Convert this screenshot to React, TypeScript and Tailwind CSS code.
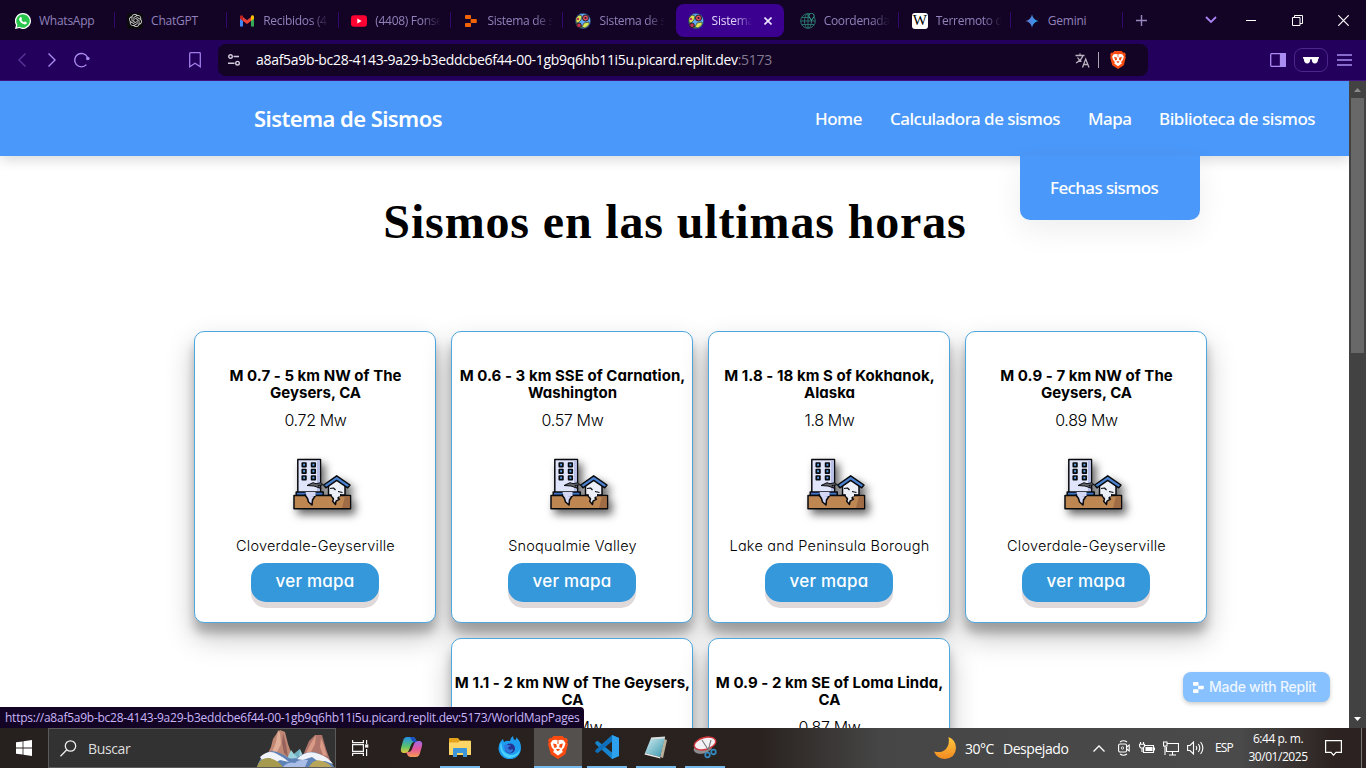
import React from 'react';
import { SiOpenai } from 'react-icons/si';

const segoe = "font-['Open_Sans','Noto_Sans',sans-serif]";

function GlobeQuake() {
  return (
    <svg width="16" height="16" viewBox="0 0 16 16">
      <circle cx="8" cy="8" r="7.7" fill="#61a8f5" stroke="#16234a" strokeWidth=".6" />
      <path d="M1 5l3-3 3 1-1 4-3 3-2-1zM9 10l5-1v3l-4 3-3-1zM1 10l5 2 1 3-4-1z" fill="#dbe457" stroke="#1a2b20" strokeWidth=".6" />
      <circle cx="10.5" cy="5" r="3" fill="#e84a63" stroke="#222" />
      <circle cx="10.5" cy="5" r="1.1" fill="#222" />
      <circle cx="4" cy="12.3" r="2.3" fill="#c73350" stroke="#222" />
      <circle cx="3" cy="6" r="1.2" fill="#c73350" />
    </svg>
  );
}

function ReplitMark({ color, w = 12 }: { color: string; w?: number }) {
  return (
    <svg width={w} height={w} viewBox="0 0 12 12" fill={color}>
      <rect x="0" y="0" width="6" height="4" rx=".8" />
      <rect x="5.6" y="4" width="6.2" height="4" rx=".8" />
      <rect x="0" y="8" width="6" height="4" rx=".8" />
    </svg>
  );
}

function BraveMark({ w, h }: { w: number; h: number }) {
  return (
    <svg width={w} height={h} viewBox="0 0 20 23">
      <path d="M5.5 0h9l2.2 2.2 1.7-.3L20 4.5l-.7 2 .7 1.7-2.7 10L10 23l-7.3-4.8L0 8.2l.7-1.7-.7-2L1.6 1.9l1.7.3z" fill="#fb4b10" />
      <path d="M4.5 4.2l3-.5 2.500.8 2.500-.8 3 .5 2 3-1.200 4-2.300 2.800.8 2L10 19.500 5.200 16l.8-2-2.300-2.800-1.200-4z" fill="#fff" />
      <path d="M5 7.500l3.400.8.400 3-2.400.7zM15 7.500l-3.400.8-.4 3 2.400.7zM7.800 13.600l2.200-.9 2.200.9L10 15.300zM9.500 4.500h1V8h-1z" fill="#fb4b10" />
    </svg>
  );
}

const favicons: Record<string, React.ReactNode> = {
  whatsapp: (
    <svg width="16" height="16" viewBox="0 0 16 16">
      <path d="M8 0a8 8 0 1 1-3.700 15.100L0 16l1-4A8 8 0 0 1 8 0z" fill="#fff" />
      <path d="M8 1.200a6.800 6.800 0 1 1-3.600 12.600L1.800 14.400l.6-2.600A6.800 6.800 0 0 1 8 1.200z" fill="#27c64b" />
      <path d="M5.300 4.200c.5-.3 1-.1 1.200.4l.5 1.200c.1.400-.4.800-.6 1.200.6 1.100 1.500 1.900 2.600 2.300.4-.2.700-.9 1.200-.8l1.400.7c.4.200.2 1.100-.1 1.500-1 1.200-2.800.7-4.200-.1-1.600-1-3-2.800-3.200-4.300-.1-.8.500-1.700 1.200-2.100z" fill="#fff" />
    </svg>
  ),
  chatgpt: (
    <span className="flex h-4 w-4 items-center justify-center rounded-[3px] bg-[#0b0b0b]">
      <SiOpenai size={13} color="#d8d8d8" />
    </span>
  ),
  gmail: (
    <svg width="16" height="16" viewBox="0 0 16 16">
      <path d="M1 4v9.500h3V7z" fill="#4285f4" />
      <path d="M15 4v9.500h-3V7z" fill="#34a853" />
      <path d="M4 4l4 3.200L12 4v4L8 11 4 8z" fill="#ea4335" />
      <path d="M1 4c0-2 2-2 3-1v5L1 5.800z" fill="#c5221f" />
      <path d="M15 4c0-2-2-2-3-1v5l3-2.200z" fill="#fbbc04" />
    </svg>
  ),
  youtube: (
    <svg width="16" height="16" viewBox="0 0 16 16">
      <rect y="2.300" width="16" height="11.500" rx="3" fill="#ff0033" />
      <path d="M6.300 5.600v5L10.700 8z" fill="#fff" />
    </svg>
  ),
  replit: <ReplitMark color="#f26207" />,
  globe: <GlobeQuake />,
  coords: (
    <svg width="16" height="16" viewBox="0 0 16 16" fill="none" stroke="#2a7168" strokeWidth="1">
      <circle cx="8" cy="8" r="7.300" />
      <ellipse cx="8" cy="8" rx="3.500" ry="7.300" />
      <path d="M8 1v14M1 8h14M2 4.500h12M2 11.500h12" />
      <path d="M11.500 7.500L9 3.500a2.600 2.600 0 1 1 5 0z" fill="#130426" stroke="#35b595" />
    </svg>
  ),
  wiki: (
    <span className="flex h-4 w-4 items-center justify-center rounded-[3px] bg-white font-['Liberation_Serif',serif] text-[15px] leading-none text-black">
      W
    </span>
  ),
  gemini: (
    <svg width="16" height="16" viewBox="0 0 16 16">
      <defs>
        <linearGradient id="gem">
          <stop stopColor="#6f6fd0" />
          <stop offset="1" stopColor="#1fa4f0" />
        </linearGradient>
      </defs>
      <path d="M8 1.500Q9.200 6.800 14.500 8 9.200 9.200 8 14.500 6.800 9.200 1.500 8 6.800 6.800 8 1.500z" fill="url(#gem)" />
    </svg>
  ),
};

const tabs = [
  { icon: 'whatsapp', label: 'WhatsApp', sep: true },
  { icon: 'chatgpt', label: 'ChatGPT', sep: true },
  { icon: 'gmail', label: 'Recibidos (4', sep: true, fade: true },
  { icon: 'youtube', label: '(4408) Fonse', sep: true, fade: true },
  { icon: 'replit', label: 'Sistema de s', sep: true, fade: true },
  { icon: 'globe', label: 'Sistema de s', fade: true },
  { icon: 'globe', label: 'Sistema', active: true, fade: true },
  { icon: 'coords', label: 'Coordenada', sep: true, fade: true },
  { icon: 'wiki', label: 'Terremoto d', sep: true, fade: true },
  { icon: 'gemini', label: 'Gemini', sep: true },
];

function TabStrip() {
  return (
    <div className={`flex h-10 items-center bg-[#130426] pl-[3px] text-[12px] text-[#9181ba] ${segoe}`}>
      {tabs.map((t, i) => (
        <div key={i} className="flex h-full w-[112.100px] shrink-0 items-center">
          <div
            className={`mt-px flex h-[33px] w-[108.500px] items-center gap-2 pl-3 ${t.active ? 'rounded-lg bg-[#3b0090] text-[#e0d4fb]' : ''}`}
          >
            <span className="flex w-4 shrink-0 justify-center">{favicons[t.icon]}</span>
            <span
              className={`overflow-hidden whitespace-nowrap ${
                t.active ? 'w-10 [mask-image:linear-gradient(to_right,black_55%,transparent)]' : 'w-[68px]'
              } ${t.fade && !t.active ? 'tracking-[-0.300px] [mask-image:linear-gradient(to_right,black_70%,transparent_97%)]' : 'tracking-[-0.250px]'}`}
            >
              {t.label}
            </span>
            {t.active && (
              <svg className="ml-1" width="8" height="8" viewBox="0 0 8 8" stroke="#f0e8ff" strokeWidth="1.600">
                <path d="M.5.500l7 7M7.500.500l-7 7" />
              </svg>
            )}
          </div>
          <div className={`ml-[2px] h-4 w-px shrink-0 ${t.sep ? 'bg-[#31086b]' : ''}`} />
        </div>
      ))}
      <svg className="ml-[12px]" width="11" height="11" viewBox="0 0 11 11" stroke="#9686bd" strokeWidth="1.400">
        <path d="M5.500 0v11M0 5.500h11" />
      </svg>
      <svg className="ml-[58px]" width="12" height="8" viewBox="0 0 12 8" fill="none" stroke="#a983f5" strokeWidth="1.800">
        <path d="M1 1l5 5 5-5" />
      </svg>
      <div className="ml-[29px] h-px w-[10px] bg-white" />
      <svg className="ml-9" width="11" height="11" viewBox="0 0 11 11" fill="none" stroke="#fff">
        <path d="M.5 2.500h7.500v8H.500zM2.500 2.500v-2h8v8H8" />
      </svg>
      <svg className="ml-[35px]" width="11" height="11" viewBox="0 0 11 11" stroke="#fff" strokeWidth="1.200">
        <path d="M.3.300l10.400 10.400M10.700.300L.3 10.700" />
      </svg>
    </div>
  );
}

function Toolbar() {
  return (
    <div className={`flex h-[41px] items-center border-b border-[#43147f] bg-[#22005c] ${segoe}`}>
      <svg className="ml-[17px]" width="10" height="16" viewBox="0 0 10 16" fill="none" stroke="#59359a" strokeWidth="1.400">
        <path d="M8.500 1.500L2 8l6.500 6.500" />
      </svg>
      <svg className="ml-5" width="10" height="16" viewBox="0 0 10 16" fill="none" stroke="#ab8df2" strokeWidth="1.400">
        <path d="M1.500 1.500L8 8l-6.500 6.500" />
      </svg>
      <svg className="ml-4" width="18" height="16" viewBox="0 0 18 16" fill="none" stroke="#ab8df2" strokeWidth="1.400">
        <path d="M13.400 12.600A6.700 6.700 0 1 1 14.300 5" />
        <circle cx="14.800" cy="6.500" r="1.800" fill="#ab8df2" stroke="none" />
      </svg>
      <svg className="ml-[97px]" width="14" height="16" viewBox="0 0 14 16" fill="none" stroke="#9f7ee8" strokeWidth="1.300">
        <path d="M2.500.700h9q.800 0 .8.800v13.300L7 11.300l-5.300 3.500V1.500q0-.8.800-.8z" />
      </svg>
      <div className="ml-4 flex h-8 w-[930px] items-center rounded-lg bg-[#130426] pl-[10px]">
        <svg width="12" height="12" viewBox="0 0 12 12" fill="none" stroke="#d2cbdc" strokeWidth="1.400">
          <circle cx="2.500" cy="2.500" r="1.800" />
          <circle cx="9.500" cy="9.200" r="1.800" />
          <path d="M5.500 2.500H11M0 9.200h6.500" />
        </svg>
        <div className="ml-4 w-[516px] whitespace-nowrap text-[14px] leading-5 tracking-[-0.310px] text-white">
          a8af5a9b-bc28-4143-9a29-b3eddcbe6f44-00-1gb9q6hb11i5u.picard.replit.dev
          <span className="text-[#82798f]">:5173</span>
        </div>
        <svg className="mt-px ml-[303px]" width="15" height="15" viewBox="0 0 15 15" fill="none" stroke="#b8b3bf" strokeWidth="1.300">
          <path d="M.5 2.500h9M5 .500v2M8 2.500Q6.500 7 1 10M2.500 4.500Q4 7 6.500 8.500M7.500 14.500l3.200-8.500 3.300 8.500M8.700 11.500h4.200" />
        </svg>
        <div className="ml-2 h-4 w-px bg-[#aaa5b0]" />
        <div className="ml-[11px]">
          <BraveMark w={16} h={18} />
        </div>
      </div>
      <svg className="ml-[122px]" width="16" height="14" viewBox="0 0 16 14" fill="none" stroke="#ab8df2" strokeWidth="1.300">
        <rect x=".7" y=".7" width="14.600" height="12.600" rx="1" />
        <rect x="10.500" y=".7" width="4.800" height="12.600" fill="#ab8df2" />
      </svg>
      <div className="ml-2 flex h-6 w-[34px] items-center justify-center rounded-lg border border-[#4c268c]">
        <svg width="16" height="7" viewBox="0 0 16 7" fill="#fff">
          <path d="M0 0h16v1.500l-.8.300Q15 6.500 11.800 6.500 9 6.500 8.700 2.200H7.300Q7 6.500 4.200 6.500 1 6.500.8 1.800L0 1.500z" />
        </svg>
      </div>
      <svg className="ml-[9px]" width="15" height="12" viewBox="0 0 15 12" stroke="#ab8df2" strokeWidth="1.300">
        <path d="M0 1h15M0 6h15M0 11h15" />
      </svg>
    </div>
  );
}

function QuakeIcon() {
  return (
    <svg
      className="[filter:drop-shadow(4px_5px_4px_rgba(0,0,0,0.6))]"
      width="59"
      height="52"
      viewBox="0 0 59 52"
      stroke="#080a0e"
      strokeWidth="1.500"
      strokeLinejoin="round"
    >
      <rect x="4.800" y="1.500" width="22.700" height="35" fill="#e1e5fb" />
      <path d="M24 2.200h2.800V36H24z" fill="#b9c0e8" stroke="none" />
      <g fill="#5aa0e8" strokeWidth="1.700">
        <rect x="9.300" y="5" width="3.600" height="3.600" />
        <rect x="18.600" y="5" width="3.600" height="3.600" />
        <rect x="9.300" y="11.500" width="3.600" height="3.600" />
        <rect x="18.600" y="11.500" width="3.600" height="3.600" />
        <rect x="9.300" y="18" width="3.600" height="3.600" />
        <rect x="18.600" y="18" width="3.600" height="3.600" />
      </g>
      <path d="M14 27.500l6-2.800 3 1 5-1 2 2-5 .8 3 3-7-2.500z" fill="#64656b" strokeWidth="1" />
      <rect x="3.200" y="34" width="27" height="3.500" fill="#3f74c8" />
      <path d="M35.500 37V26l8.200-6.500L52 26v11z" fill="#eef0f8" />
      <path d="M30.700 27l13-9.200L57 27l-2.300 2.800-11-7.400-10.800 7.400z" fill="#4c83d0" />
      <path d="M37 30.500l3.500-.5 2 2M45 33.500l4.500 1" fill="none" strokeWidth="1.200" />
      <rect x="1" y="37.500" width="56.500" height="13.300" fill="#be8752" />
      <path d="M52 38.300h4.700v11.800H49z" fill="#a06c45" stroke="none" />
      <path d="M12 37l2.500 3.500 1 3.500 3.500 3 .5-5 3-4.500z" fill="#d3d6f5" />
      <path d="M12.500 34h10v4h-9z" fill="#d3d6f5" stroke="none" />
      <path d="M38 37.500l2.500 3.500-.8 2.200 2.800 3.300.5-3.300 3.500-2-1.500-1.300 2.500-3z" fill="#eef0f8" />
      <path d="M38.500 35h8.500v3.500h-8z" fill="#eef0f8" stroke="none" />
    </svg>
  );
}

const quakes = [
  { l1: 'M 0.7 - 5 km NW of The', l2: 'Geysers, CA', mag: '0.72 Mw', place: 'Cloverdale-Geyserville' },
  { l1: 'M 0.6 - 3 km SSE of Carnation,', l2: 'Washington', mag: '0.57 Mw', place: 'Snoqualmie Valley' },
  { l1: 'M 1.8 - 18 km S of Kokhanok,', l2: 'Alaska', mag: '1.8 Mw', place: 'Lake and Peninsula Borough' },
  { l1: 'M 0.9 - 7 km NW of The', l2: 'Geysers, CA', mag: '0.89 Mw', place: 'Cloverdale-Geyserville' },
  { l1: 'M 1.1 - 2 km NW of The Geysers,', l2: 'CA', mag: '1.06 Mw', place: 'Cloverdale-Geyserville' },
  { l1: 'M 0.9 - 2 km SE of Loma Linda,', l2: 'CA', mag: '0.87 Mw', place: 'Loma Linda' },
];

function QuakeCard({ q }: { q: (typeof quakes)[number] }) {
  return (
    <div className="flex h-[292px] w-[242px] shrink-0 flex-col items-center rounded-[10px] border border-[#4fa7e0] bg-white pt-[35px] text-center font-['Inter','Open_Sans',sans-serif] whitespace-nowrap text-black shadow-[0_14px_28px_rgba(0,0,0,0.25),0_10px_10px_rgba(0,0,0,0.22)] [font-feature-settings:'cv11']">
      <h2 className="pl-[2px] text-[15px] leading-[17px] font-bold tracking-[0.040px]">
        {q.l1}
        <br />
        {q.l2}
      </h2>
      <p className="mt-[9px] pl-[2px] text-[16px] leading-5 font-light tracking-[-0.340px]">{q.mag}</p>
      <div className="mt-[28px] ml-4 h-[52px]">
        <QuakeIcon />
      </div>
      <p className="mt-[26px] pl-[2px] text-[14.500px] leading-5 font-light tracking-[0.220px]">{q.place}</p>
      <button className="mt-[7px] h-[39px] w-32 rounded-[15px] bg-[#3498db] pb-[3px] pl-px text-[17px] leading-5 font-medium tracking-[0.200px] text-white shadow-[0_6px_0_#e0d9da]">
        ver mapa
      </button>
    </div>
  );
}

function SiteHeader() {
  return (
    <header className="relative z-10 flex h-[75px] shrink-0 items-center bg-[#4a98f9] pr-[34px] pl-[254px] font-['Noto_Sans',sans-serif] whitespace-nowrap text-white shadow-[0_4px_12px_rgba(0,0,0,0.15)]">
      <div className="w-[187px] text-[22px] font-semibold tracking-[-0.580px]">Sistema de Sismos</div>
      <nav className="ml-auto flex gap-7 text-[17px] font-medium tracking-[-0.520px]">
        <a className="w-[47px]">Home</a>
        <a className="w-[170px]">Calculadora de sismos</a>
        <a className="w-[43px]">Mapa</a>
        <a className="w-[156px] tracking-[-0.450px]">Biblioteca de sismos</a>
      </nav>
      <div className="absolute top-[75px] left-[1020px] flex h-16 w-[180px] items-center rounded-b-[10px] bg-[#4a98f9] pl-[30px] text-[17px] font-medium tracking-[-0.600px] shadow-[0_10px_30px_rgba(0,0,0,0.07)]">
        Fechas sismos
      </div>
    </header>
  );
}

function Scrollbar() {
  return (
    <div className="flex w-[17px] shrink-0 flex-col items-center bg-[#424242]">
      <svg className="mt-[7px] mb-[6px]" width="7" height="4" viewBox="0 0 7 4" fill="#8b8b8b">
        <path d="M3.500 0L7 4H0z" />
      </svg>
      <div className="h-[255px] w-[13px] bg-[#686868]" />
      <svg className="mt-auto mb-[7px]" width="7" height="4" viewBox="0 0 7 4" fill="#fff">
        <path d="M3.500 4L7 0H0z" />
      </svg>
    </div>
  );
}

function Mountains() {
  return (
    <svg width="78" height="37" viewBox="0 0 78 37">
      <path d="M9 27l5-10 2-8 4-6 3-3 5 2 3 12 4 11-8 8z" fill="#c08874" />
      <path d="M21 0l-2 12-5 13 6-3 4-8-1-11z" fill="#e0ad96" />
      <path d="M26 3l-1 10 2 10 4 4-2-13z" fill="#96635c" />
      <path d="M45 28l4-10 3-7 6-6 7 0 4 14 4 11-14 4z" fill="#b0756a" />
      <path d="M59 5l-5 8-7 14 7-5 4-8z" fill="#d99b86" />
      <path d="M64 8l-1 9 3 8 4 1-3-10z" fill="#d99b86" />
      <path d="M30 29l4-9 3 4 6-5 4 9-5 6z" fill="#9cd3da" />
      <path d="M37 24l6-5-1 10z" fill="#6fb0c0" />
      <path d="M0 37q4-14 15-16 8 1 17 7 7 2 12-3 12-6 20 0 9 4 13 12z" fill="#5f83b6" />
      <path d="M3 27q9-8 17-3 6 3 12 8l-9-2-5 3-5-5-8 2zM40 29q10-10 22-5 9 3 14 10l-8-3-6 1-7-5-9 3z" fill="#f1f3fa" />
      <path d="M0 37q3-10 12-9 9 2 14 9z" fill="#a59a4d" />
      <path d="M52 37q5-9 13-6 7 2 10 6z" fill="#b7a55a" />
      <path d="M26 37q5-6 12-4 4-4 13-3l-3 7z" fill="#a9bde6" />
    </svg>
  );
}

const taskApps: { open?: boolean; active?: boolean; icon: React.ReactNode }[] = [
  {
    icon: (
      <svg width="23" height="22" viewBox="0 0 23 22">
        <defs>
          <linearGradient id="cpa" x1="0" y1="0" x2="0" y2="1">
            <stop stopColor="#2490e8" />
            <stop offset=".6" stopColor="#5ac36a" />
            <stop offset="1" stopColor="#e8c93a" />
          </linearGradient>
          <linearGradient id="cpb" x1="0" y1="0" x2="0" y2="1">
            <stop stopColor="#a169e8" />
            <stop offset=".5" stopColor="#e6579a" />
            <stop offset="1" stopColor="#f79a52" />
          </linearGradient>
        </defs>
        <path d="M7 1h6q2 0 3 3l1 2h-3q-2 0-3 3l-2 5q-1 3-4 3H4q-4 0-3-5L3 5q1-4 4-4z" fill="url(#cpa)" />
        <path d="M16 21h-6q-2 0-3-3l-1-2h3q2 0 3-3l2-5q1-3 4-3h1q4 0 3 5l-2 7q-1 4-4 4z" fill="url(#cpb)" />
        <path d="M10 1h3q2 0 3 3l1 2h-3q-2 0-3-3z" fill="#1d4fc0" />
      </svg>
    ),
  },
  {
    open: true,
    icon: (
      <svg width="22" height="19" viewBox="0 0 22 19">
        <path d="M0 1q0-1 1-1h8l2 2.500h10q1 0 1 1V17H0z" fill="#e5a21b" />
        <path d="M0 4.500h9L11 3h11v14H0z" fill="#fcd768" />
        <path d="M4 19v-8q0-1 1-1h12q1 0 1 1v8h-4v-4H8v4z" fill="#3c96d8" />
      </svg>
    ),
  },
  {
    icon: (
      <svg width="23" height="23" viewBox="0 0 23 23">
        <path d="M3 5l2-2 1 3q3-2 6-1 0-3 3-5 0 3 2 4 2-1 1-3 5 4 5 11a11.200 11.200 0 0 1-22.500 0Q.5 8 3 5z" fill="#1e9df0" />
        <path d="M3 6q-2 7 1 11 3 5 8 5 9-1 10-9-3 6-9 6Q5 18 4 11z" fill="#49d0fb" />
        <circle cx="12" cy="12.500" r="5" fill="#25338f" />
        <path d="M6 9q4-1 7 1-2 0-3 2 1 3 5 1 0 4-4 4-5-2-5-8z" fill="#2f7ae0" />
      </svg>
    ),
  },
  { open: true, active: true, icon: <BraveMark w={20} h={23} /> },
  {
    open: true,
    icon: (
      <svg width="24" height="24" viewBox="0 0 24 24">
        <path d="M17 0l7 3v18l-7 3L1 9.500l-1-2 2.500-1.700L17 17.500z" fill="#1684cf" />
        <path d="M17 0v6.500L2.500 18.200 0 16.500l1-2z" fill="#0f6fb8" />
        <path d="M17 0l7 3v18l-7 3z" fill="#2da0ee" />
      </svg>
    ),
  },
  {
    open: true,
    icon: (
      <svg width="24" height="23" viewBox="0 0 24 23">
        <defs>
          <linearGradient id="np" x1="0" y1="0" x2="1" y2="1">
            <stop stopColor="#d4eff2" />
            <stop offset="1" stopColor="#3796ad" />
          </linearGradient>
        </defs>
        <path d="M20 3l3 1-4 18-3-1z" fill="#b9b09b" />
        <path d="M7 2l14-1-5 20-15-4z" fill="url(#np)" />
        <path d="M7 1.500L21 .500v2L7 3.500z" fill="#d8dcdc" />
        <path d="M1 17l15 4 .5 1.500-16-4z" fill="#eee" />
      </svg>
    ),
  },
  {
    open: true,
    icon: (
      <svg width="25" height="23" viewBox="0 0 25 23">
        <ellipse cx="10" cy="12" rx="9.500" ry="5.500" transform="rotate(-15 10 12)" fill="#8d8d8f" />
        <ellipse cx="12" cy="7.500" rx="11" ry="6" transform="rotate(-15 12 7.500)" fill="#f3f1f3" stroke="#d3353d" strokeWidth="1.400" />
        <path d="M9 4l7 11M18 4l-3 11" stroke="#77797d" strokeWidth="1.100" />
        <circle cx="14.500" cy="19" r="2.300" fill="none" stroke="#328ac0" strokeWidth="1.700" />
        <circle cx="20.500" cy="16" r="2.300" fill="none" stroke="#328ac0" strokeWidth="1.700" />
      </svg>
    ),
  },
];

function Taskbar() {
  return (
    <div className={`flex h-10 shrink-0 bg-[linear-gradient(to_right,#26201e_0,#29221f_760px,#464646_880px,#4a4a4a_1240px,#2d2422_1330px,#2a2120_1366px)] whitespace-nowrap text-white ${segoe}`}>
      <div className="flex w-12 items-center justify-center">
        <svg width="16" height="16" viewBox="0 0 16 16" fill="#fff">
          <path d="M0 2.300L6.600 1.400v6.200H0zM7.400 1.300L16 0v7.600H7.400zM0 8.400h6.600v6.200L0 13.700zM7.400 8.400H16V16l-8.600-1.200z" />
        </svg>
      </div>
      <div className="flex w-72 items-center border border-[#5d5b5a] bg-[#333232] pl-[11px]">
        <svg width="17" height="17" viewBox="0 0 17 17" fill="none" stroke="#eee" strokeWidth="1.300">
          <circle cx="10.500" cy="6" r="5.200" />
          <path d="M6.800 9.800L.5 16.300" />
        </svg>
        <span className="ml-[11px] w-[44px] text-[14px] tracking-[-0.350px] text-[#dedede]">Buscar</span>
        <div className="mt-px ml-auto">
          <Mountains />
        </div>
      </div>
      <div className="flex w-12 items-center justify-center">
        <svg width="17" height="16" viewBox="0 0 17 16" fill="none" stroke="#f5f5f5" strokeWidth="1.200">
          <path d="M.6 0v2.600h10.800V0M.6 16v-2.600h10.800V16M.6 4.600h10.800v6.800H.600zM14.600 0v4M14.600 9v7" />
          <rect x="13.700" y="5" width="2" height="2" fill="#fff" />
        </svg>
      </div>
      <div className="ml-[3px] flex">
        {taskApps.map((a, i) => (
          <div
            key={i}
            className={`mr-px flex w-12 flex-col items-center ${a.active ? 'bg-[#53504e]' : ''}`}
          >
            <div className="flex h-[38px] items-center">{a.icon}</div>
            <div className={`h-[2px] ${a.active ? 'w-12' : 'w-10'} ${a.open ? 'bg-[#76b9ed]' : ''}`} />
          </div>
        ))}
      </div>
      <div className="ml-auto flex items-center">
        <svg width="22" height="22" viewBox="0 0 22 22">
          <defs>
            <linearGradient id="moon" x1="0" y1="0" x2="0" y2="1">
              <stop stopColor="#ffc83c" />
              <stop offset="1" stopColor="#f28a22" />
            </linearGradient>
          </defs>
          <path d="M14.500 0Q22 3 22 11q-.5 10-11 11Q3 22 0 14.500q8 2 12-2.500 4-5 2.500-12z" fill="url(#moon)" />
        </svg>
        <span className="ml-[9px] w-[29px] text-[14px] tracking-[-0.500px]">30°C</span>
        <span className="ml-[9px] w-[66px] text-[14px] tracking-[-0.450px]">Despejado</span>
        <svg className="ml-6" width="12" height="7" viewBox="0 0 12 7" fill="none" stroke="#fff" strokeWidth="1.300">
          <path d="M.5 6.500L6 1l5.500 5.500" />
        </svg>
        <svg className="ml-[13px]" width="12" height="16" viewBox="0 0 12 16" fill="none" stroke="#fff" strokeWidth="1.100">
          <rect x=".6" y="4" width="8" height="8" rx="1.500" />
          <path d="M8.600 7l2.600-2v6L8.600 9M2 2Q5.500-.5 9 2M2 14q3.500 2.500 7 0" />
          <circle cx="4.500" cy="8" r="1.200" strokeWidth=".8" />
        </svg>
        <svg className="ml-[9px]" width="16" height="12" viewBox="0 0 16 12" fill="none" stroke="#fff" strokeWidth="1.100">
          <path d="M4.500 3.500h10v7h-10z" />
          <path d="M7 5.500h6v3H7z" fill="#fff" />
          <path d="M15.500 5.500v3M1.500 0v2M4.500 0v2M.5 2.200h5v2q-1 2-2.500 2t-2.500-2zM3 6v4" fill="#4a4a4a" />
        </svg>
        <svg className="ml-2" width="16" height="15" viewBox="0 0 16 15" fill="none" stroke="#fff" strokeWidth="1.100">
          <path d="M4 2.500h11.500v8H3.500V6M9.500 10.500v3M6 14h7" />
          <path d="M.5 1h3.500v4H.500zM2 5v9" />
        </svg>
        <svg className="ml-2" width="17" height="14" viewBox="0 0 17 14" fill="none" stroke="#fff" strokeWidth="1.100">
          <path d="M.6 4.500H3l3.500-3.500v12L3 9.500H.600zM9 5q1.500 2 0 4M11.300 3q3 4 0 8M13.600 1q4.500 6 0 12" />
        </svg>
        <span className="ml-[11px] w-[19px] text-[12px] tracking-[-0.900px]">ESP</span>
        <div className="ml-[14px] w-[60px] text-center text-[12px] leading-[18px] tracking-[-0.450px]">
          6:44 p. m.
          <br />
          30/01/2025
        </div>
        <svg className="ml-[17px]" width="17" height="16" viewBox="0 0 17 16" fill="none" stroke="#fff" strokeWidth="1.200">
          <path d="M.6.600h15.800v11.800H11l-2.500 2.800L6 12.400H.600z" />
        </svg>
        <div className="mr-1 ml-[19px] h-10 w-px bg-[#777]" />
      </div>
    </div>
  );
}

export default function App() {
  return (
    <div className="relative flex h-[768px] w-[1366px] flex-col overflow-hidden bg-white">
      <TabStrip />
      <Toolbar />
      <div className="flex h-[647px]">
        <div className="flex w-[1349px] flex-col overflow-hidden bg-white">
          <SiteHeader />
          <h1 className="mt-[38px] pl-px text-center font-['Liberation_Serif',serif] text-[48px] leading-[56px] font-bold tracking-[0.860px] whitespace-nowrap text-black">
            Sismos en las ultimas horas
          </h1>
          <main className="mt-[81px] ml-[51px] flex shrink-0 flex-wrap justify-center gap-[15px] px-[100px]">
            {quakes.map((q) => (
              <QuakeCard key={q.l1} q={q} />
            ))}
          </main>
        </div>
        <Scrollbar />
      </div>
      <Taskbar />
      <a className="absolute top-[672px] left-[1183px] flex h-[30px] w-[147px] items-center rounded-lg bg-[#87c1ff] pl-[10px] font-['Inter','Open_Sans',sans-serif] text-[14px] font-medium tracking-[-0.250px] whitespace-nowrap text-[#eef6ff] shadow-[0_2px_4px_rgba(0,0,0,0.2)]">
        <ReplitMark color="#fff" w={11} />
        <span className="mb-[2px] ml-[5px]">Made with Replit</span>
      </a>
      <div className={`absolute top-[707px] left-0 h-[21px] w-[584px] rounded-tr bg-[#130426] pl-[5px] text-[12px] leading-[21px] tracking-[-0.250px] whitespace-nowrap text-[#c9b5f7] ${segoe}`}>
        https://a8af5a9b-bc28-4143-9a29-b3eddcbe6f44-00-1gb9q6hb11i5u.picard.replit.dev:5173/WorldMapPages
      </div>
    </div>
  );
}
